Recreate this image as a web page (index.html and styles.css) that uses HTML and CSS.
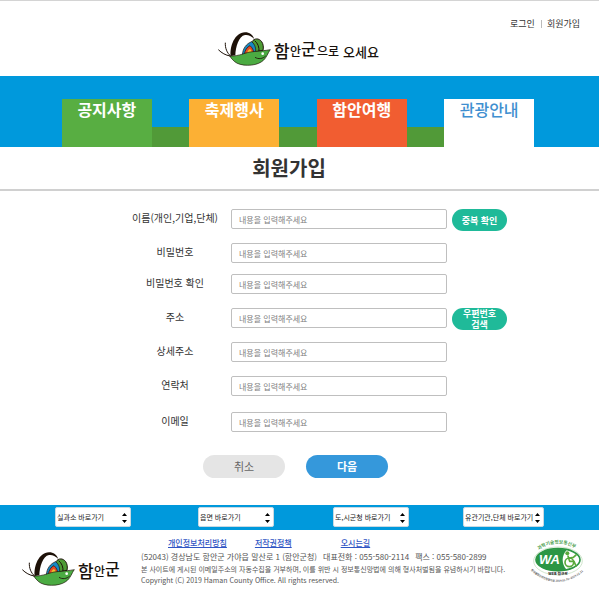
FILE: index.html
```html
<!DOCTYPE html>
<html lang="ko">
<head>
<meta charset="utf-8">
<meta name="viewport" content="width=device-width, initial-scale=1">
<title>회원가입</title>
<link rel="stylesheet" href="styles.css">
</head>
<body>
<svg class="defs" aria-hidden="true">
  <symbol id="bug" viewBox="50 95 162 102">
    <path d="M92 165C96 130 108 99 132 98C148 98 157 108 162 124L142 158Z" fill="#fff"/>
    <path d="M91 167C88 138 103 97 134 96C148 96 157 103 162 116C152 106 144 103 134 104C115 107 106 140 105 165Z" fill="#1d1108"/>
    <path d="M155 124C162 113 176 113 184 124C189 131 190 141 188 150L158 156Z" fill="#4d9b35" stroke="#1d1108" stroke-width="3"/>
    <path d="M163 121C172 128 177 140 176 154" fill="none" stroke="#1d1108" stroke-width="3"/>
    <path d="M126 165C127 144 138 130 154 124C164 132 168 145 165 158Z" fill="#1689c4" stroke="#1d1108" stroke-width="2"/>
    <path d="M132 164C133 150 140 140 149 136C158 144 161 153 159 160Z" fill="#e44b27" stroke="#1d1108" stroke-width="2"/>
    <path d="M140 162C140 154 144 148 149 146C154 151 156 157 154 161Z" fill="#f2c52e"/>
    <path d="M88 167C120 168 132 156 158 154C178 152 194 151 210 148C202 158 199 174 184 184C163 199 119 198 103 184C97 179 92 173 88 167Z" fill="#4bab42" stroke="#1d1108" stroke-width="2"/>
    <path d="M54 148C64 158 76 165 90 167M75 127C74 143 80 158 91 167" fill="none" stroke="#1d1108" stroke-width="3"/>
    <path d="M164 171C174 177 187 176 196 167" fill="none" stroke="#1d1108" stroke-width="2.5"/>
    <circle cx="187" cy="160" r="4" fill="#fff"/>
  </symbol>
</svg>

<header class="top">
  <nav class="account" aria-label="회원 메뉴">
    <a href="#">로그인</a>
    <a href="#">회원가입</a>
  </nav>
  <a class="logo" href="#">
    <svg class="bug" aria-hidden="true"><use href="#bug"/></svg>
    <svg class="wordmark" viewBox="0 0 108 34">
      <g class="brush">
        <text x="0" y="26" font-size="17">함</text>
        <text x="16" y="24" font-size="12">안</text>
        <text x="27" y="23" font-size="16">군</text>
        <text x="43" y="24" font-size="12">으로</text>
        <text x="69" y="25" font-size="13">오세요</text>
      </g>
    </svg>
  </a>
</header>

<nav class="menu" aria-label="주 메뉴">
  <div class="tabs">
    <a class="tab notice" href="#">공지사항</a>
    <a class="tab festival" href="#">축제행사</a>
    <a class="tab travel" href="#">함안여행</a>
    <a class="tab guide" href="#">관광안내</a>
  </div>
</nav>

<main>
  <h1>회원가입</h1>
  <form class="join">
    <div class="fields">
      <label for="name">이름(개인,기업,단체)</label>
      <input id="name" type="text" placeholder="내용을 입력해주세요">
      <button class="check" type="button">중복 확인</button>
      <label for="pw">비밀번호</label>
      <input id="pw" type="password" placeholder="내용을 입력해주세요">
      <label for="pw2">비밀번호 확인</label>
      <input id="pw2" type="password" placeholder="내용을 입력해주세요">
      <label for="addr">주소</label>
      <input id="addr" type="text" placeholder="내용을 입력해주세요">
      <button class="check" type="button">우편번호<br>검색</button>
      <label for="addr2">상세주소</label>
      <input id="addr2" type="text" placeholder="내용을 입력해주세요">
      <label for="tel">연락처</label>
      <input id="tel" type="tel" placeholder="내용을 입력해주세요">
      <label for="mail">이메일</label>
      <input id="mail" type="email" placeholder="내용을 입력해주세요">
    </div>
    <div class="actions">
      <button class="cancel" type="button">취소</button>
      <button class="next" type="submit">다음</button>
    </div>
  </form>
</main>

<div class="shortcuts">
  <div class="pick"><select aria-label="실과소 바로가기"><option>실과소 바로가기</option></select><svg viewBox="0 0 5 10" aria-hidden="true"><path d="M0 3L2.500 0L5 3ZM0 7L2.500 10L5 7Z"/></svg></div>
  <div class="pick"><select aria-label="읍면 바로가기"><option>읍면 바로가기</option></select><svg viewBox="0 0 5 10" aria-hidden="true"><path d="M0 3L2.500 0L5 3ZM0 7L2.500 10L5 7Z"/></svg></div>
  <div class="pick"><select aria-label="도,시군청 바로가기"><option>도,시군청 바로가기</option></select><svg viewBox="0 0 5 10" aria-hidden="true"><path d="M0 3L2.500 0L5 3ZM0 7L2.500 10L5 7Z"/></svg></div>
  <div class="pick"><select aria-label="유관기관,단체 바로가기"><option>유관기관,단체 바로가기</option></select><svg viewBox="0 0 5 10" aria-hidden="true"><path d="M0 3L2.500 0L5 3ZM0 7L2.500 10L5 7Z"/></svg></div>
</div>

<footer>
  <a class="logo" href="#">
    <svg class="bug" aria-hidden="true"><use href="#bug"/></svg>
    <svg class="wordmark short" viewBox="0 0 46 34">
      <g class="brush">
        <text x="0" y="26" font-size="17">함</text>
        <text x="16" y="24" font-size="12">안</text>
        <text x="27" y="23" font-size="16">군</text>
      </g>
    </svg>
  </a>
  <div class="info">
    <nav class="links" aria-label="이용 안내">
      <a href="#">개인정보처리방침</a>
      <a href="#">저작권정책</a>
      <a class="way" href="#">오시는길</a>
    </nav>
    <p class="address"><span>(52043) 경상남도 함안군 가야읍 말산로 1 (함안군청)</span><span>대표전화 : 055-580-2114</span><span>팩스 : 055-580-2899</span></p>
    <p>본 사이트에 게시된 이메일주소의 자동수집을 거부하며, 이를 위반 시 정보통신망법에 의해 형사처벌됨을 유념하시기 바랍니다.</p>
    <p>Copyright (C) 2019 Haman County Office. All rights reserved.</p>
  </div>
  <svg class="mark" viewBox="0 0 165 126" role="img" aria-label="WA WEB 접근성">
    <path id="arc-top" d="M20 27Q78 -12 138 27" fill="none"/>
    <path id="arc-bottom" d="M-4 88Q80 160 165 82" fill="none"/>
    <ellipse cx="78" cy="60" rx="73" ry="42" fill="#fff" stroke="#b9d8b4" stroke-width="2"/>
    <ellipse cx="78" cy="56" rx="66" ry="33" fill="#fff" stroke="#2c9644" stroke-width="5"/>
    <path d="M13 56C13 35 42 24 78 24C90 24 98 25 104 27C88 44 88 69 104 86C52 94 13 80 13 56Z" fill="#2c9644"/>
    <text class="wa" x="21" y="70" font-size="39">WA</text>
    <g fill="none" stroke="#5aaa3c" stroke-width="5" stroke-linecap="round" stroke-linejoin="round">
      <circle cx="112" cy="64" r="13"/>
      <path d="M108 45L113 61L126 61L132 75M110 52L124 49L132 42"/>
    </g>
    <circle cx="106" cy="37" r="6" fill="#5aaa3c"/>
    <text class="arc green" font-size="14"><textPath href="#arc-top">과학기술정보통신부</textPath></text>
    <text class="web" x="78" y="103" font-size="11" text-anchor="middle">WEB 접근성</text>
    <text class="arc" font-size="8"><textPath href="#arc-bottom">한국웹접근성인증평가원 2019.01.01~2019.12.31</textPath></text>
  </svg>
</footer>
</body>
</html>
```
FILE: styles.css
```css
* { box-sizing: border-box; }

body {
  margin: 0;
  border-top: 1px solid #d4d4d4;
  background: #fff;
  color: #333;
  font-family: "Noto Sans CJK KR", "Noto Sans", sans-serif;
  font-size: 10px;
}

a { color: inherit; text-decoration: none; }

button, input, select { font-family: inherit; margin: 0; }

.defs { position: absolute; width: 0; height: 0; }

.top {
  display: flex;
  flex-direction: column;
  height: 75px;
  padding: 15px 19px 0;
}

.account {
  display: flex;
  align-self: flex-end;
  font-size: 9px;
  line-height: 16px;
}

.account a + a { margin-left: 6px; padding-left: 6px; background: linear-gradient(#bbb, #bbb) left center / 1px 8px no-repeat; }

.logo { display: flex; gap: 3px; }
.top .logo { align-self: center; }
.bug { width: 54px; height: 34px; }
.wordmark { width: 108px; height: 34px; overflow: visible; }
.wordmark.short { width: 46px; }
.brush { fill: #17110c; font-weight: 500; }

.menu {
  padding: 23px 65px 0 62px;
  background: #0099dc;
}

.tabs {
  display: flex;
  justify-content: space-between;
  background: linear-gradient(#519a38, #519a38) bottom / 100% 20px no-repeat;
}

.tab {
  flex: 0 0 19%;
  height: 48px;
  color: #fff;
  font-size: 16px;
  font-weight: 700;
  line-height: 20px;
  text-align: center;
}

.notice { background: #58ae42; }
.festival { background: #fcb034; }
.travel { background: #f15d31; }
.guide { background: #fff; color: #3f8fd0; font-weight: 500; }

h1 {
  margin: 0;
  padding-right: 21px;
  border-bottom: 2px solid #d0d0d0;
  color: #333;
  font-size: 20px;
  font-weight: 700;
  line-height: 42px;
  text-align: center;
}

.join { padding: 18px 0 27px; }

.fields {
  display: grid;
  grid-template-columns: 100px 216px 55px;
  grid-template-rows: 34px 31px 34px 34px 34px 36px 22px;
  column-gap: 5px;
  justify-content: center;
  align-items: start;
  padding-left: 34px;
}

.fields label {
  grid-column: 1;
  padding-right: 2px;
  line-height: 18px;
  text-align: center;
  white-space: nowrap;
}

.fields input {
  grid-column: 2;
  width: 100%;
  height: 20px;
  padding: 0 7px;
  border: 1px solid #bfbfbf;
  border-radius: 2px;
  font-size: 8px;
}

.fields input::placeholder { color: #808080; }

.check {
  height: 22px;
  padding: 0;
  border: 0;
  border-radius: 11px;
  background: #1fba99;
  color: #fff;
  font-size: 9px;
  font-weight: 700;
  line-height: 11px;
}

.actions {
  display: flex;
  justify-content: center;
  gap: 21px;
  padding: 21px 8px 0 0;
}

.actions button {
  width: 82px;
  height: 23px;
  padding: 0;
  border: 0;
  border-radius: 12px;
  font-size: 11px;
  line-height: 23px;
}

.cancel { background: #e5e5e5; color: #666; }
.next { background: #3598db; color: #fff; font-weight: 700; }

.shortcuts {
  display: grid;
  grid-template-columns: 143fr 135fr 130fr 81fr;
  padding: 2px 55px 3px;
  background: #0099dc;
}

.pick { position: relative; justify-self: start; }

.pick select {
  display: block;
  width: 76px;
  height: 20px;
  padding: 0 1px;
  border: 1px solid #c9d9e2;
  border-radius: 2px;
  background: #fff;
  color: #222;
  font-size: 7px;
  appearance: none;
}

.pick:last-child select { width: 81px; }

.pick svg {
  position: absolute;
  top: 6px;
  right: 4px;
  width: 5px;
  height: 10px;
  pointer-events: none;
}

footer {
  display: flex;
  padding: 6px 12px 7px 21px;
}

footer .logo { padding-top: 16px; }

.info {
  flex: 1;
  padding-left: 17px;
  color: #555;
  font-size: 7px;
  white-space: nowrap;
}

.links {
  display: flex;
  gap: 28px;
  padding-left: 27px;
  color: #2f55c4;
  font-size: 8px;
  font-weight: 500;
  line-height: 14px;
}

.links a { text-decoration: underline; }
.way { margin-left: 21px; }

.info p { margin: 0; line-height: 11px; }
.info .address { display: flex; gap: 6px; font-size: 8px; line-height: 14px; }

.mark { width: 55px; height: 42px; flex: none; align-self: flex-start; margin-top: 5px; overflow: visible; }
.wa { fill: #fff; font-family: "Liberation Sans", sans-serif; font-style: italic; font-weight: 700; }
.arc { fill: #555; font-weight: 700; }
.green { fill: #4e9f50; }
.web { fill: #333; font-weight: 900; }
```
